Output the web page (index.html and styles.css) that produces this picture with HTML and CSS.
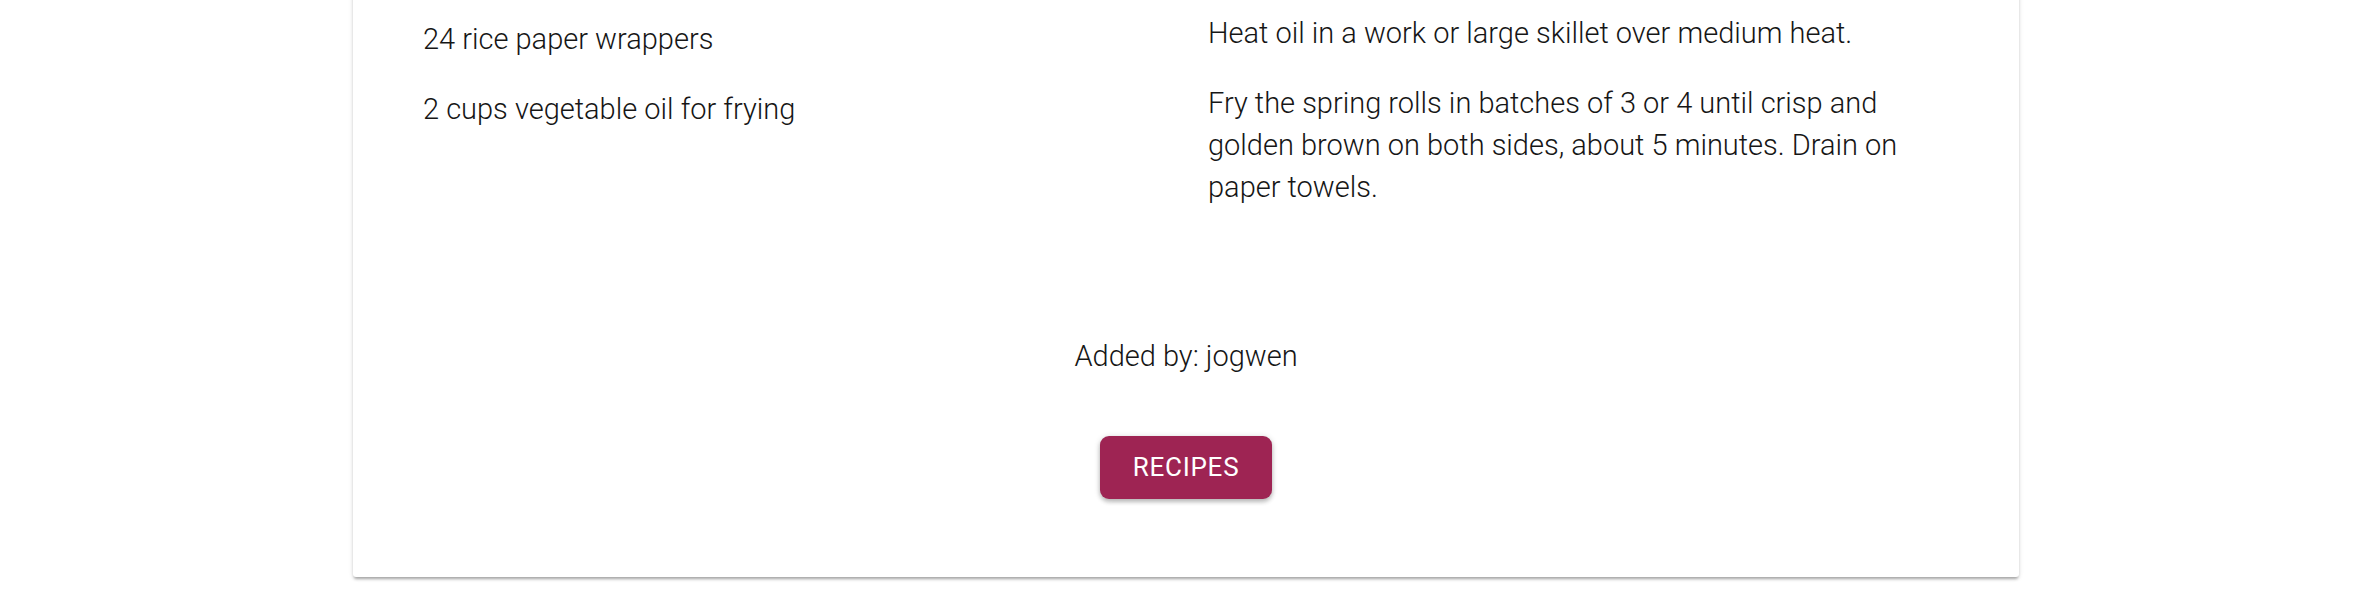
FILE: index.html
```html
<!DOCTYPE html>
<html lang="en">
<head>
<meta charset="utf-8">
<title>Recipe</title>
<link rel="stylesheet" href="styles.css">
</head>
<body>
<div class="page">
  <div class="card">
    <div class="columns">
      <div class="col ingredients">
        <p>24 rice paper wrappers</p>
        <p>2 cups vegetable oil for frying</p>
      </div>
      <div class="col instructions">
        <p>Heat oil in a work or large skillet over medium heat.</p>
        <p>Fry the spring rolls in batches of 3 or 4 until crisp and golden brown on both sides, about 5 minutes. Drain on paper towels.</p>
      </div>
    </div>
    <p class="author">Added by: jogwen</p>
    <div class="actions">
      <a class="btn" href="#">Recipes</a>
    </div>
  </div>
</div>
</body>
</html>
```
FILE: styles.css
```css
html, body {
  margin: 0;
  padding: 0;
  background: #ffffff;
}

body {
  font-family: Roboto, "Liberation Sans", sans-serif;
  font-weight: 300;
  font-size: 29px;
  line-height: 42px;
  color: #161616;
}

.page {
  padding: 0 0 17px 4px;
}

.card {
  box-sizing: border-box;
  width: 1666px;
  margin: -40px auto 0;
  padding: 52px 48px 78px;
  background: #ffffff;
  border-radius: 3px;
  box-shadow: 0 3px 3px -1px rgba(0, 0, 0, 0.3),
              0 1px 5px 0 rgba(0, 0, 0, 0.12);
}

.columns {
  display: grid;
  grid-template-columns: 1fr 1fr;
}

.col {
  padding: 0 22px;
  display: flex;
  flex-direction: column;
  gap: 28px;
}

.col p {
  margin: 0;
}

.ingredients {
  padding-top: 6px;
}

.author {
  margin: 127px 0 0;
  text-align: center;
}

.actions {
  display: flex;
  justify-content: center;
  margin-top: 59px;
}

.btn {
  display: inline-block;
  height: 63px;
  line-height: 63px;
  padding: 0 33px;
  background: #9e2453;
  color: #ffffff;
  text-decoration: none;
  text-transform: uppercase;
  font-weight: 400;
  font-size: 26px;
  letter-spacing: 0.75px;
  border-radius: 9px;
  box-shadow: 0 3px 4px 0 rgba(0, 0, 0, 0.2),
              0 1px 6px 0 rgba(0, 0, 0, 0.16);
}
```
